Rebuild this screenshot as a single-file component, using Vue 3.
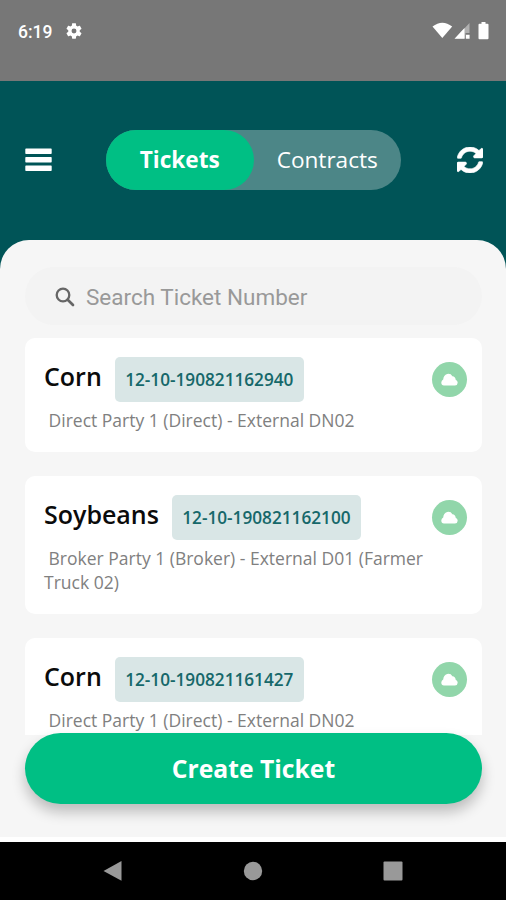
<script setup>
const tickets = [
  { crop: 'Corn', number: '12-10-190821162940', detail: 'Direct Party 1 (Direct) - External DN02' },
  { crop: 'Soybeans', number: '12-10-190821162100', detail: 'Broker Party 1 (Broker) - External D01 (Farmer Truck 02)' },
  { crop: 'Corn', number: '12-10-190821161427', detail: 'Direct Party 1 (Direct) - External DN02' },
]
</script>

<template>
  <div class="phone">
    <div class="status">
      <span class="time">6:19</span>
      <svg class="gear" viewBox="2 2 20 20"><path fill="#fff" d="M19.14 12.94c.04-.3.06-.61.06-.94 0-.32-.02-.64-.07-.94l2.03-1.58c.18-.14.23-.41.12-.61l-1.92-3.32c-.12-.22-.37-.29-.59-.22l-2.39.96c-.5-.38-1.03-.7-1.62-.94l-.36-2.54c-.04-.24-.24-.41-.48-.41h-3.84c-.24 0-.43.17-.47.41l-.36 2.54c-.59.24-1.13.57-1.62.94l-2.39-.96c-.22-.08-.47 0-.59.22L2.74 8.87c-.12.21-.08.47.12.61l2.03 1.58c-.05.3-.09.63-.09.94s.02.64.07.94l-2.03 1.58c-.18.14-.23.41-.12.61l1.92 3.32c.12.22.37.29.59.22l2.39-.96c.5.38 1.03.7 1.62.94l.36 2.54c.05.24.24.41.48.41h3.84c.24 0 .44-.17.47-.41l.36-2.54c.59-.24 1.13-.56 1.62-.94l2.39.96c.22.08.47 0 .59-.22l1.92-3.32c.12-.22.07-.47-.12-.61l-2.01-1.58zM12 15.1a3.1 3.1 0 1 1 0-6.2 3.1 3.1 0 0 1 0 6.2z"/></svg>
      <svg class="signals" viewBox="0 0 58 18">
        <path fill="#fff" d="M.5 4.6Q10.3-3 20.200 4.600L10.300 16z"/>
        <path fill="#b0b0b0" d="M37.500 1v10h-4v5.500H23z"/>
        <path fill="#fff" d="M32.500 6v10.800H22.500zM34 12.800h3.600v3.900H34z"/>
        <path fill="#fff" d="M47.500 1.700h2V0h4v1.700h2q1 0 1 1v13.500q0 1-1 1h-8q-1 0-1-1V2.700q0-1 1-1z"/>
      </svg>
    </div>

    <header class="header">
      <svg class="menu" viewBox="0 0 27 24"><path fill="#fff" d="M1 .5h25q.7 0 .7.700v4.100q0 .7-.7.700H1q-.7 0-.7-.7V1.200Q.3.500 1 .500zM1 9h25q.7 0 .7.700v4q0 .7-.7.700H1q-.7 0-.7-.7v-4Q.3 9 1 9zM1 17.500h25q.7 0 .7.700v4.100q0 .7-.7.700H1q-.7 0-.7-.7v-4.100q0-.7.700-.7z"/></svg>
      <div class="toggle">
        <div class="tab active"><span>Tickets</span></div>
        <div class="tab"><span>Contracts</span></div>
      </div>
      <svg class="sync" viewBox="8 8 496 496"><path fill="#fff" stroke="#fff" stroke-width="12" d="M370.720 133.280C339.458 104.008 298.888 87.962 255.848 88c-77.458.068-144.328 53.178-162.791 126.850-1.344 5.363-6.122 9.150-11.651 9.150H24.103c-7.498 0-13.194-6.807-11.807-14.176C33.933 94.924 134.813 8 256 8c66.448 0 126.791 26.136 171.315 68.685L463.030 40.970C478.149 25.851 504 36.559 504 57.941V192c0 13.255-10.745 24-24 24H345.941c-21.382 0-32.090-25.851-16.971-40.971l41.750-41.749zM32 296h134.059c21.382 0 32.090 25.851 16.971 40.971l-41.750 41.750c31.262 29.273 71.835 45.319 114.876 45.280 77.418-.07 144.315-53.144 162.787-126.849 1.344-5.363 6.122-9.150 11.651-9.150h57.304c7.498 0 13.194 6.807 11.807 14.176C478.067 417.076 377.187 504 256 504c-66.448 0-126.791-26.136-171.315-68.685L48.970 471.030C33.851 486.149 8 475.441 8 454.059V320c0-13.255 10.745-24 24-24z"/></svg>
    </header>

    <main class="sheet">
      <div class="search">
        <svg class="glass" viewBox="0 0 20 20"><circle cx="8" cy="8" r="6.300" fill="none" stroke="#666" stroke-width="2.300"/><path d="M12.700 12.700l5.300 5.300" stroke="#666" stroke-width="2.700" stroke-linecap="round"/></svg>
        <span class="placeholder">Search Ticket Number</span>
      </div>
      <div class="list">
        <article v-for="t in tickets" :key="t.number" class="card">
          <div class="row">
            <h2 class="crop">{{ t.crop }}</h2>
            <span class="number"><span>{{ t.number }}</span></span>
            <span class="sent">
              <svg class="cloud" viewBox="0 0 17 13"><path fill="#fff" d="M3 12.500Q.3 12.300.3 9.500.4 7.300 2.200 6.500 2.500 1.900 6.200.9 9.700.2 11.400 3.200 14.300 3.200 14.700 6.700 16.700 7.700 16.700 9.700 16.500 12.400 14 12.500z"/></svg>
            </span>
          </div>
          <p class="detail">&nbsp;{{ t.detail }}</p>
        </article>
      </div>
      <button class="create"><span>Create Ticket</span></button>
    </main>

    <nav class="nav">
      <svg viewBox="0 0 20 22"><path fill="#999" d="M18.500 1v19.800L.5 10.900z"/></svg>
      <svg viewBox="0 0 20 22"><circle cx="10" cy="11" r="9.200" fill="#999"/></svg>
      <svg viewBox="0 0 20 22"><rect x=".5" y="1.500" width="19" height="19" rx="1" fill="#999"/></svg>
    </nav>
  </div>
</template>

<style>
body {
  margin: 0;
  background: #000;
}
</style>

<style scoped>
.phone {
  width: 506px;
  height: 900px;
  overflow: hidden;
  display: flex;
  flex-direction: column;
  background: #005457;
  font-family: "Open Sans", "Noto Sans", sans-serif;
}
svg {
  display: block;
  flex: none;
}
.status {
  height: 81px;
  flex: none;
  box-sizing: border-box;
  padding: 21px 16px 0 18px;
  display: flex;
  align-items: flex-start;
  background: #777;
}
.time {
  width: 48px;
  font: 500 17.5px/22px Roboto, sans-serif;
  color: #fff;
}
.gear {
  width: 16px;
  height: 16px;
  margin-top: 2px;
}
.signals {
  width: 58px;
  height: 18px;
  margin: 1px 0 0 auto;
}
.header {
  height: 159px;
  flex: none;
  box-sizing: border-box;
  padding: 0 23px 1px 25px;
  display: flex;
  align-items: center;
}
.menu {
  width: 27px;
  height: 24px;
}
.toggle {
  width: 295px;
  height: 60px;
  margin-left: 54px;
  display: flex;
  border-radius: 30px;
  background: #4c8687;
  color: #fff;
}
.tab {
  width: 148px;
  line-height: 59px;
  text-align: center;
  font-size: 22.6px;
}
.active {
  border-radius: 30px;
  background: #00bf84;
  font-weight: 700;
}
.sync {
  width: 26px;
  height: 26px;
  margin-left: auto;
}
.sheet {
  height: 597px;
  flex: none;
  box-sizing: border-box;
  padding: 27px 24px 0 25px;
  border-radius: 29px 29px 0 0;
  background: #f6f6f6;
}
.search {
  height: 58px;
  box-sizing: border-box;
  padding: 0 30px;
  display: flex;
  align-items: center;
  border-radius: 29px;
  background: #f3f3f3;
}
.glass {
  width: 20px;
  height: 20px;
  margin-top: 2px;
}
.placeholder {
  margin-left: 11px;
  padding-top: 2px;
  font: 22.5px/26px Roboto, sans-serif;
  color: #999;
  white-space: nowrap;
}
.list {
  height: 397px;
  margin-top: 13px;
  overflow: hidden;
}
.card {
  box-sizing: border-box;
  padding: 19px 15px 20px 19px;
  margin-bottom: 24px;
  border-radius: 10px;
  background: #fff;
}
.row {
  display: flex;
  align-items: center;
  height: 45px;
}
.crop {
  margin: 0 13px 0 0;
  font-size: 25px;
  font-weight: 600;
  line-height: 33px;
  padding-bottom: 6px;
  color: #0b0b0b;
}
.number {
  width: 189px;
  line-height: 45px;
  border-radius: 5px;
  background: #d9e6e6;
  color: #16686a;
  text-align: center;
  font-size: 17.2px;
  font-weight: 600;
}
.sent {
  width: 35px;
  height: 35px;
  margin-left: auto;
  display: flex;
  align-items: center;
  justify-content: center;
  border-radius: 50%;
  background: #91d6aa;
}
.cloud {
  width: 17px;
  height: 13px;
}
.detail {
  margin: 6px 0 0;
  width: 400px;
  font-size: 17.5px;
  line-height: 24px;
  color: #808080;
}
.create {
  display: block;
  position: relative;
  width: 457px;
  height: 71px;
  margin: -2px 0 0;
  padding: 0 0 1px;
  border: 0;
  border-radius: 36px;
  background: #00bf84;
  box-shadow: 0 8px 14px rgba(0, 0, 0, 0.24);
  color: #fff;
  font: 700 24.7px/33px "Open Sans", "Noto Sans", sans-serif;
}
.nav {
  flex: 1;
  display: flex;
  justify-content: center;
  gap: 120px;
  padding-top: 18px;
  border-top: 5px solid #fff;
  background: #000;
}
.nav svg {
  width: 20px;
  height: 22px;
}
</style>
